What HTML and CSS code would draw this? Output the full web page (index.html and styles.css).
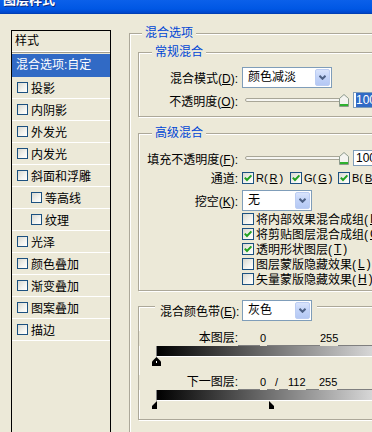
FILE: index.html
```html
<!DOCTYPE html>
<html lang="zh-CN">
<head>
    <meta charset="UTF-8">
    <title>图层样式</title>
    <link rel="stylesheet" href="styles.css">
</head>
<body>
    <div class="titlebar"><span class="title">图层样式</span></div>

    <div class="dialog">
        <!-- Список стилей -->
        <div class="style-list">
            <div class="list-head">样式</div>
            <div class="list-sel">混合选项:自定</div>
            <div class="list-item"><span class="cb"></span>投影</div>
            <div class="list-item"><span class="cb"></span>内阴影</div>
            <div class="list-item"><span class="cb"></span>外发光</div>
            <div class="list-item"><span class="cb"></span>内发光</div>
            <div class="list-item"><span class="cb"></span>斜面和浮雕</div>
            <div class="list-item sub"><span class="cb"></span>等高线</div>
            <div class="list-item sub"><span class="cb"></span>纹理</div>
            <div class="list-item"><span class="cb"></span>光泽</div>
            <div class="list-item"><span class="cb"></span>颜色叠加</div>
            <div class="list-item"><span class="cb"></span>渐变叠加</div>
            <div class="list-item"><span class="cb"></span>图案叠加</div>
            <div class="list-item"><span class="cb"></span>描边</div>
        </div>

        <div class="main">
            <div class="group outer">
                <div class="legend">混合选项</div>

                <!-- Общее смешивание -->
                <div class="group sub-group general">
                    <div class="legend">常规混合</div>
                    <div class="row combo-row">
                        <span class="label">混合模式(<u>D</u>):</span>
                        <div class="combo wide">
                            <span class="combo-text">颜色减淡</span>
                            <span class="combo-btn"><svg width="7" height="5" viewBox="0 0 7 5"><polyline points="0.5,0.8 3.5,3.8 6.5,0.8" fill="none" stroke="#4d6185" stroke-width="2"/></svg></span>
                        </div>
                    </div>
                    <div class="row slider-row">
                        <span class="label">不透明度(<u>O</u>):</span>
                        <div class="slider">
                            <span class="track"></span>
                            <svg class="thumb" width="10" height="13" viewBox="0 0 10 13"><path d="M0.5 4.5 L5 0.5 L9.5 4.5 V12.5 H0.5 Z" fill="#f4f4f0" stroke="#8c9a8c"/><rect x="1" y="10" width="8" height="2" fill="#2fb12f"/></svg>
                        </div>
                        <span class="num"><span class="picked">100</span></span>
                    </div>
                </div>

                <!-- Продвинутое смешивание -->
                <div class="group sub-group advanced">
                    <div class="legend">高级混合</div>
                    <div class="row slider-row fill-row">
                        <span class="label">填充不透明度(<u>F</u>):</span>
                        <div class="slider">
                            <span class="track"></span>
                            <svg class="thumb" width="10" height="13" viewBox="0 0 10 13"><path d="M0.5 4.5 L5 0.5 L9.5 4.5 V12.5 H0.5 Z" fill="#f4f4f0" stroke="#8c9a8c"/><rect x="1" y="10" width="8" height="2" fill="#2fb12f"/></svg>
                        </div>
                        <span class="num">100</span>
                    </div>
                    <div class="row chan-row">
                        <span class="label">通道:</span>
                        <span class="chan"><span class="cb big"><svg width="10" height="10" viewBox="0 0 10 10"><path d="M1.8 4.6 L4 7 L8.4 2.4" fill="none" stroke="#21a121" stroke-width="2"/></svg></span>R(<u>R</u>)</span>
                        <span class="chan"><span class="cb big"><svg width="10" height="10" viewBox="0 0 10 10"><path d="M1.8 4.6 L4 7 L8.4 2.4" fill="none" stroke="#21a121" stroke-width="2"/></svg></span>G(<u>G</u>)</span>
                        <span class="chan"><span class="cb big"><svg width="10" height="10" viewBox="0 0 10 10"><path d="M1.8 4.6 L4 7 L8.4 2.4" fill="none" stroke="#21a121" stroke-width="2"/></svg></span>B(<u>B</u>)</span>
                    </div>
                    <div class="row combo-row knock-row">
                        <span class="label">挖空(<u>K</u>):</span>
                        <div class="combo">
                            <span class="combo-text">无</span>
                            <span class="combo-btn"><svg width="7" height="5" viewBox="0 0 7 5"><polyline points="0.5,0.8 3.5,3.8 6.5,0.8" fill="none" stroke="#4d6185" stroke-width="2"/></svg></span>
                        </div>
                    </div>
                    <div class="opts">
                        <div class="opt"><span class="cb big"></span>将内部效果混合成组(<u>I</u>)</div>
                        <div class="opt"><span class="cb big"><svg width="10" height="10" viewBox="0 0 10 10"><path d="M1.8 4.6 L4 7 L8.4 2.4" fill="none" stroke="#21a121" stroke-width="2"/></svg></span>将剪贴图层混合成组(<u>G</u>)</div>
                        <div class="opt"><span class="cb big"><svg width="10" height="10" viewBox="0 0 10 10"><path d="M1.8 4.6 L4 7 L8.4 2.4" fill="none" stroke="#21a121" stroke-width="2"/></svg></span>透明形状图层(<u>T</u>)</div>
                        <div class="opt"><span class="cb big"></span>图层蒙版隐藏效果(<u>L</u>)</div>
                        <div class="opt"><span class="cb big"></span>矢量蒙版隐藏效果(<u>H</u>)</div>
                    </div>
                </div>

                <!-- Цветовой диапазон -->
                <div class="group sub-group band">
                    <div class="band-legend">
                        <span class="band-label">混合颜色带(<u>E</u>):</span>
                        <div class="combo">
                            <span class="combo-text">灰色</span>
                            <span class="combo-btn"><svg width="7" height="5" viewBox="0 0 7 5"><polyline points="0.5,0.8 3.5,3.8 6.5,0.8" fill="none" stroke="#4d6185" stroke-width="2"/></svg></span>
                        </div>
                    </div>

                    <div class="val-row first">
                        <span class="label">本图层:</span>
                        <span class="val v-zero">0</span>
                        <span class="val v-max">255</span>
                    </div>
                    <div class="ramp"></div>
                    <div class="thumbs">
                        <svg width="9" height="9" viewBox="0 0 9 9"><path d="M4.5 0 L9 4.5 V9 H0 V4.5 Z" fill="#000"/><rect x="4" y="4" width="1" height="2" fill="#fff"/></svg>
                    </div>

                    <div class="val-row second">
                        <span class="label">下一图层:</span>
                        <span class="val v-zero">0</span>
                        <span class="val v-slash">/</span>
                        <span class="val v-mid">112</span>
                        <span class="val v-max2">255</span>
                    </div>
                    <div class="ramp"></div>
                    <div class="thumbs">
                        <svg width="5" height="8" viewBox="0 0 5 8"><path d="M5 0 V8 H0 V5 Z" fill="#000"/></svg>
                        <svg class="split-right" width="5" height="8" viewBox="0 0 5 8"><path d="M0 0 L5 5 V8 H0 Z" fill="#000"/></svg>
                    </div>
                </div>
            </div>
        </div>
    </div>
</body>
</html>
```

FILE: styles.css
```css
:root {
    --face: #ece9d8;
    --edge: #aca899;
    --legend: #0046d5;
    --select: #316ac5;
    --field: #7f9db9;
}

* {
    box-sizing: border-box;
}

body {
    margin: 0;
    width: 372px;
    height: 432px;
    overflow: hidden;
    background: var(--face);
    color: #000;
    font: 12px "Liberation Sans", "Noto Sans CJK SC", sans-serif;
}

u {
    text-decoration: underline;
}

/* Заголовок окна */
.titlebar {
    height: 14px;
    overflow: hidden;
    background: linear-gradient(#0b60ea, #0057e4 65%, #0047cc 90%, #003aa8);
}

.title {
    display: block;
    margin: -7px 0 0 3px;
    line-height: 14px;
    font-size: 13px;
    font-weight: bold;
    color: #fff;
    text-shadow: 1px 1px #0a2a80;
}

.dialog {
    display: flex;
    align-items: flex-start;
}

/* Список стилей */
.style-list {
    margin: 16px 0 0 11px;
    width: 100px;
    height: 420px;
    border: 1px solid #000;
    flex: none;
}

.list-head {
    height: 21px;
    line-height: 21px;
    padding-left: 3px;
    border-bottom: 1px solid #fff;
    box-shadow: 0 1px 0 #a19e90;
    margin-bottom: 2px;
}

.list-sel {
    height: 23px;
    line-height: 23px;
    padding-left: 4px;
    background: var(--select);
    color: #fff;
}

.list-item {
    height: 22px;
    display: flex;
    align-items: center;
    gap: 3px;
    padding-left: 5px;
    border-bottom: 1px solid #fff;
}

.list-item.sub {
    padding-left: 19px;
}

.cb {
    width: 11px;
    height: 11px;
    flex: none;
    display: flex;
    align-items: center;
    justify-content: center;
    border: 1px solid #1c5180;
    background: linear-gradient(135deg, #d8d8d0, #f4f4f0 60%, #fff);
}

.cb.big {
    width: 12px;
    height: 12px;
}

/* Основная панель */
.main {
    margin: 19px 0 0 18px;
}

.group {
    border: 1px solid var(--edge);
    box-shadow: inset 1px 1px 0 #fff, 1px 1px 0 #fff;
}

.outer {
    width: 300px;
    height: 420px;
}

.legend {
    width: max-content;
    height: 13px;
    line-height: 13px;
    margin: -7px 0 0 12px;
    padding: 0 3px;
    background: var(--face);
    color: var(--legend);
}

.sub-group {
    width: 280px;
    margin: 12px 0 0 8px;
}

.sub-group .legend {
    margin-left: 13px;
}

.advanced {
    margin-top: 16px;
    padding-bottom: 4px;
}

.band {
    margin-top: 15px;
    padding-bottom: 9px;
}

.general {
    padding-bottom: 8px;
}

.row {
    display: flex;
    align-items: center;
}

.label {
    width: 99px;
    flex: none;
    text-align: right;
    white-space: nowrap;
}

.row .label {
    margin-right: 4px;
}

.combo-row {
    height: 21px;
}

.general .combo-row {
    margin-top: 8px;
}

.slider-row {
    height: 16px;
    margin-top: 4px;
}

.fill-row {
    margin-top: 10px;
}

.chan-row {
    height: 15px;
    margin-top: 4px;
}

.knock-row {
    margin-top: 5px;
}

/* Выпадающий список */
.combo {
    width: 70px;
    height: 21px;
    display: flex;
    padding: 1px;
    border: 1px solid var(--field);
    background: #fff;
    flex: none;
}

.combo.wide {
    width: 90px;
}

.combo-text {
    flex: 1;
    padding-left: 4px;
    line-height: 17px;
}

.combo-btn {
    width: 15px;
    height: 17px;
    display: flex;
    align-items: center;
    justify-content: center;
    border: 1px solid #bccdf3;
    border-radius: 2px;
    background: linear-gradient(#d9e4fc, #c2d3f8 50%, #b4c8f4);
}

/* Ползунок */
.slider {
    width: 108px;
    display: flex;
    align-items: center;
    flex: none;
}

.track {
    width: 102px;
    height: 4px;
    margin-left: 3px;
    border: 1px solid #a8a697;
    border-radius: 2px;
    background: #f6f6f2;
}

.thumb {
    margin-left: -8px;
}

.num {
    width: 30px;
    height: 16px;
    margin-left: 3px;
    padding-left: 2px;
    line-height: 14px;
    border: 1px solid var(--field);
    background: #fff;
    flex: none;
}

.picked {
    background: var(--select);
    color: #fff;
}

.chan {
    width: 48px;
    display: flex;
    align-items: center;
    gap: 2px;
    flex: none;
    font-size: 11px;
}

.opts {
    padding-left: 103px;
}

.opt {
    height: 15px;
    display: flex;
    align-items: center;
    gap: 2px;
    white-space: nowrap;
}

/* Цветовой диапазон */
.band-legend {
    width: max-content;
    display: flex;
    align-items: center;
    gap: 4px;
    margin: -7px 0 0 16px;
    padding: 0 5px;
    background: var(--face);
}

.band-label {
    width: 78px;
    text-align: right;
    white-space: nowrap;
}

.val-row {
    height: 15px;
    display: flex;
    align-items: center;
    margin: 10px 0 -1px;
    font-size: 11px;
}

.val-row .label {
    font-size: 12px;
}

.val-row.second {
    margin-top: 9px;
}

.val-row span {
    position: relative;
    background: var(--face);
    height: 15px;
    line-height: 15px;
}

.val {
    display: inline-block;
}

.v-zero {
    width: 7px;
    margin-left: 22px;
}

.v-max {
    margin-left: 53px;
}

.v-slash {
    width: 4px;
    margin-left: 8px;
}

.v-mid {
    width: 18px;
    margin-left: 9px;
}

.v-max2 {
    margin-left: 13px;
}

.ramp {
    width: 257px;
    height: 12px;
    margin-left: 17px;
    border-top: 1px solid #7f7f7f;
    border-left: 1px solid #7f7f7f;
    border-bottom: 1px solid #fff;
    background: linear-gradient(to right, #000, #fff);
}

.thumbs {
    height: 9px;
    display: flex;
    align-items: flex-start;
    margin-left: 13px;
}

.split-right {
    margin-left: 112px;
}
```
